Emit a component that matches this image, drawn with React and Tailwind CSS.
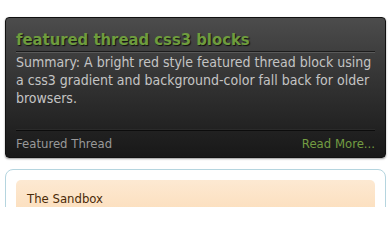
export default function App() {
  const font = { fontFamily: '"DejaVu Sans Condensed", "DejaVu Sans", sans-serif' };
  return (
    <div className="w-[392px] h-[207px] bg-white overflow-hidden pt-[17px] px-[5px]" style={font}>
      <div className="w-[381px] h-[141px] rounded-[4px] border border-[#111] bg-gradient-to-b from-[#4c4c4c] to-[#181818] px-[10px] pt-[12px] flex flex-col shadow-[0_1px_2px_rgba(0,0,0,0.4)]">
        <div className="border-b border-[#1c1c1c] shadow-[0_1px_0_#5a5a5a] pb-[1px]">
          <h2 className="text-[16.5px] leading-[20px] font-bold text-[#6e9c3e] [text-shadow:1px_1px_1px_#111]">
            featured thread css3 blocks
          </h2>
        </div>
        <p className="mt-[1px] text-[14px] leading-[18px] text-[#c4c4c4]">
          Summary: A bright red style featured thread block using a css3 gradient and background-color fall back for older browsers.
        </p>
        <div className="mt-auto border-t border-[#0c0c0c] shadow-[0_-1px_0_#2a2a2a]" />
        <div className="h-[26px] flex items-center justify-between text-[13px]">
          <span className="text-[#999]">Featured Thread</span>
          <span className="text-[#739c42]">Read More...</span>
        </div>
      </div>
      <div className="mt-[11px] w-[381px] h-[60px] rounded-[8px] border border-[#b5d5df] bg-white px-[10px] pt-[10px]">
        <div className="h-[40px] rounded-[5px] bg-gradient-to-b from-[#fde9d2] to-[#fbdcb8] px-[11px] pt-[6px]">
          <span className="text-[13px] leading-[18px] text-[#4a2a08]">The Sandbox</span>
        </div>
      </div>
    </div>
  );
}
